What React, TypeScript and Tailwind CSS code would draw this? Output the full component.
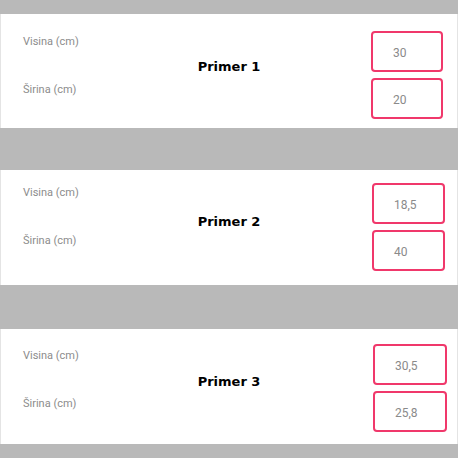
type Example = {
  title: string;
  visina: string;
  sirina: string;
  labelTop: string;
  titleTop: string;
  boxTop: string;
  boxRight: string;
  boxWidth: string;
  height: string;
};

const examples: Example[] = [
  {
    title: 'Primer 1',
    visina: '30',
    sirina: '20',
    labelTop: 'pt-[20px]',
    titleTop: 'pt-[45px]',
    boxTop: 'pt-[17px]',
    boxRight: 'pr-[14px]',
    boxWidth: 'w-[72px]',
    height: 'h-[114px]',
  },
  {
    title: 'Primer 2',
    visina: '18,5',
    sirina: '40',
    labelTop: 'pt-[15px]',
    titleTop: 'pt-[44px]',
    boxTop: 'pt-[13px]',
    boxRight: 'pr-[12px]',
    boxWidth: 'w-[73px]',
    height: 'h-[115px]',
  },
  {
    title: 'Primer 3',
    visina: '30,5',
    sirina: '25,8',
    labelTop: 'pt-[19px]',
    titleTop: 'pt-[45px]',
    boxTop: 'pt-[15px]',
    boxRight: 'pr-[10px]',
    boxWidth: 'w-[74px]',
    height: 'h-[115px]',
  },
];

function ValueBox({ value, width }: { value: string; width: string }) {
  return (
    <div
      className={`${width} flex h-[41px] items-center rounded-[4px] border-2 border-[#f0386b] bg-white pl-[20px] pt-[2px] text-[12px] leading-[16px] text-[#8a8a8a] [font-family:Roboto,'Liberation_Sans',sans-serif]`}
    >
      {value}
    </div>
  );
}

function ExampleCard({ example }: { example: Example }) {
  return (
    <section
      className={`${example.height} grid grid-cols-[1fr_auto_1fr] border-x border-[#e4e4e4] bg-white`}
    >
      <div
        className={`${example.labelTop} flex flex-col gap-[32px] pl-[22px] text-[11px] leading-[16px] text-[#8c8c8c] [font-family:Roboto,'Liberation_Sans',sans-serif]`}
      >
        <span>Visina (cm)</span>
        <span>Širina (cm)</span>
      </div>

      <div
        className={`${example.titleTop} text-[13px] font-bold leading-[16px] text-black [font-family:'DejaVu_Sans',Verdana,sans-serif]`}
      >
        {example.title}
      </div>

      <div className={`${example.boxTop} ${example.boxRight} flex flex-col items-end gap-[6px]`}>
        <ValueBox value={example.visina} width={example.boxWidth} />
        <ValueBox value={example.sirina} width={example.boxWidth} />
      </div>
    </section>
  );
}

export default function App() {
  return (
    <div className="flex h-[458px] w-[458px] flex-col bg-[#b9b9b9] pt-[14px]">
      <ExampleCard example={examples[0]} />
      <div className="h-[42px] shrink-0" />
      <ExampleCard example={examples[1]} />
      <div className="h-[44px] shrink-0" />
      <ExampleCard example={examples[2]} />
    </div>
  );
}
